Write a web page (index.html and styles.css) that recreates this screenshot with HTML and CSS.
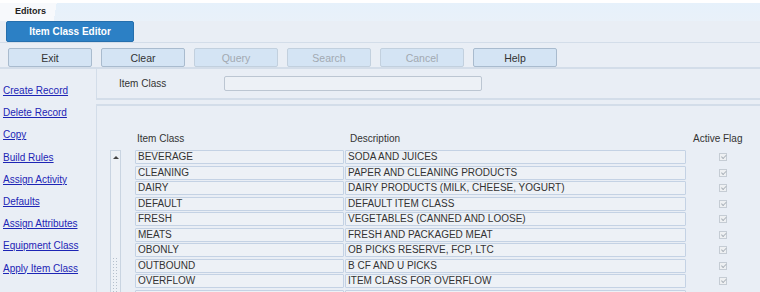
FILE: index.html
```html
<!DOCTYPE html>
<html>
<head>
<meta charset="utf-8">
<link rel="stylesheet" href="styles.css">
</head>
<body>
<div class="app">
  <div class="tabbar">
    <div class="tab">Editors</div>
  </div>
  <div class="titlebar">
    <div class="title">Item Class Editor</div>
  </div>
  <div class="toolbar">
    <button class="btn">Exit</button>
    <button class="btn">Clear</button>
    <button class="btn dis">Query</button>
    <button class="btn dis">Search</button>
    <button class="btn dis">Cancel</button>
    <button class="btn">Help</button>
  </div>
  <div class="main">
    <div class="sidebar">
      <a href="#">Create Record</a>
      <a href="#">Delete Record</a>
      <a href="#">Copy</a>
      <a href="#">Build Rules</a>
      <a href="#">Assign Activity</a>
      <a href="#">Defaults</a>
      <a href="#">Assign Attributes</a>
      <a href="#">Equipment Class</a>
      <a href="#">Apply Item Class</a>
    </div>
    <div class="content">
      <div class="filter">
        <span class="flabel">Item Class</span>
        <div class="finput"></div>
      </div>
      <div class="grid-panel">
        <div class="ghead">
          <span class="h1">Item Class</span>
          <span class="h2">Description</span>
          <span class="h3">Active Flag</span>
        </div>
        <div class="gbody">
          <div class="scroll"><div class="up"></div><div class="grip"></div></div>
          <div class="rows">
            <div class="row"><div class="c1">BEVERAGE</div><div class="c2">SODA AND JUICES</div><div class="c3"><span class="cb"></span></div></div>
            <div class="row"><div class="c1">CLEANING</div><div class="c2">PAPER AND CLEANING PRODUCTS</div><div class="c3"><span class="cb"></span></div></div>
            <div class="row"><div class="c1">DAIRY</div><div class="c2">DAIRY PRODUCTS (MILK, CHEESE, YOGURT)</div><div class="c3"><span class="cb"></span></div></div>
            <div class="row"><div class="c1">DEFAULT</div><div class="c2">DEFAULT ITEM CLASS</div><div class="c3"><span class="cb"></span></div></div>
            <div class="row"><div class="c1">FRESH</div><div class="c2">VEGETABLES (CANNED AND LOOSE)</div><div class="c3"><span class="cb"></span></div></div>
            <div class="row"><div class="c1">MEATS</div><div class="c2">FRESH AND PACKAGED MEAT</div><div class="c3"><span class="cb"></span></div></div>
            <div class="row"><div class="c1">OBONLY</div><div class="c2">OB PICKS RESERVE, FCP, LTC</div><div class="c3"><span class="cb"></span></div></div>
            <div class="row"><div class="c1">OUTBOUND</div><div class="c2">B CF AND U PICKS</div><div class="c3"><span class="cb"></span></div></div>
            <div class="row"><div class="c1">OVERFLOW</div><div class="c2">ITEM CLASS FOR OVERFLOW</div><div class="c3"><span class="cb"></span></div></div>
            <div class="row"><div class="c1"></div><div class="c2"></div><div class="c3"><span class="cb"></span></div></div>
          </div>
        </div>
      </div>
    </div>
  </div>
</div>
</body>
</html>
```
FILE: styles.css
```css
* { box-sizing: border-box; }
html, body { margin: 0; padding: 0; }
body {
  width: 760px; height: 292px; overflow: hidden;
  background: #e9eef5;
  font-family: "Liberation Sans", Arial, sans-serif;
  font-size: 10px; color: #333;
}
.app { display: flex; flex-direction: column; height: 292px; }
.tabbar {
  height: 21px; padding-top: 3px;
  background: linear-gradient(#ffffff 0, #ffffff 3px, #e6f1fb 3px, #e9f1f9 21px);
  display: flex;
}
.tab {
  width: 66px; height: 18px;
  background: linear-gradient(100deg, #f7f9fc 82%, transparent 82%);
  font-weight: bold; font-size: 9px; color: #222;
  padding: 3px 0 0 15px;
}
.titlebar {
  height: 22px; padding-left: 6px;
  border-bottom: 1px solid #d3dde9;
  background: #e9eef5;
}
.title {
  width: 128px; height: 21px;
  background: #2c80c5; border: 1px solid #256fad; border-radius: 2px;
  color: #fff; font-weight: bold; font-size: 10px;
  display: flex; align-items: center; justify-content: center;
}
.toolbar {
  height: 27px; display: flex; gap: 9px; padding: 5px 0 0 8px;
  border-bottom: 2px solid #d3dde9;
}
.btn {
  width: 84px; height: 19px; padding: 0;
  background: #d4e4f4; border: 1px solid #a9bbce; border-radius: 2px;
  font-family: "Liberation Sans", Arial, sans-serif; font-size: 10.5px; color: #333;
}
.btn.dis { color: #a2a9b1; border-color: #c2d0de; }
.main { display: flex; flex: 1; }
.sidebar {
  width: 97px; display: flex; flex-direction: column;
  padding: 15px 0 0 3px; gap: 8.2px;
}
.sidebar a { color: #1d25b5; text-decoration: underline; font-size: 10px; line-height: 14px; }
.content { flex: 1; display: flex; flex-direction: column; }
.filter {
  height: 31px; display: flex; align-items: center;
  border-left: 1px solid #d3dde9; border-bottom: 2px solid #d3dde9;
}
.flabel { margin-left: 22px; width: 105px; }
.finput {
  width: 258px; height: 15px; background: #edf1f6;
  border: 1px solid #bcc6d2; border-radius: 2px;
}
.grid-panel {
  flex: 1; margin-top: 4px;
  border-left: 1px solid #d3dde9; border-top: 2px solid #d3dde9;
  padding-top: 25px;
}
.ghead { display: flex; height: 15px; align-items: center; }
.h1 { margin-left: 40px; width: 213px; }
.h2 { width: 343px; }
.h3 { }
.gbody { display: flex; margin-top: 4px; }
.scroll {
  width: 11px; margin-left: 13px; margin-right: 14px; height: 150px;
  border: 1px solid #c9d4e1; border-bottom: none; background: #edf1f6;
  position: relative;
}
.up {
  width: 0; height: 0; margin: 5px auto 0;
  border-left: 3px solid transparent; border-right: 3px solid transparent;
  border-bottom: 3px solid #444;
}
.grip {
  position: absolute; left: 1px; right: 1px; top: 106px; bottom: 0;
  background-image: radial-gradient(circle, #b5c0cc 0.7px, transparent 0.9px);
  background-size: 3px 3px;
}
.rows { display: flex; flex-direction: column; gap: 1.5px; }
.row { display: flex; height: 14px; }
.c1, .c2 {
  height: 14px; background: #edf1f6; border: 1px solid #c4d2e4; border-radius: 1px;
  padding-left: 2px; line-height: 12px; font-size: 10px; color: #333; white-space: nowrap;
}
.c1 { width: 209px; margin-right: 1px; }
.c2 { width: 341px; }
.c3 { width: 74px; display: flex; justify-content: center; align-items: center; }
.cb {
  width: 8px; height: 8px; border: 1px solid #c5ccd4; background: #eef0f2;
  position: relative;
}
.cb::after {
  content: ""; position: absolute; left: 1px; width: 4px; height: 2px;
  border-left: 1px solid #a9b0b8; border-bottom: 1px solid #a9b0b8;
  transform: rotate(-45deg); transform-origin: left top; top: 3px;
}
```
